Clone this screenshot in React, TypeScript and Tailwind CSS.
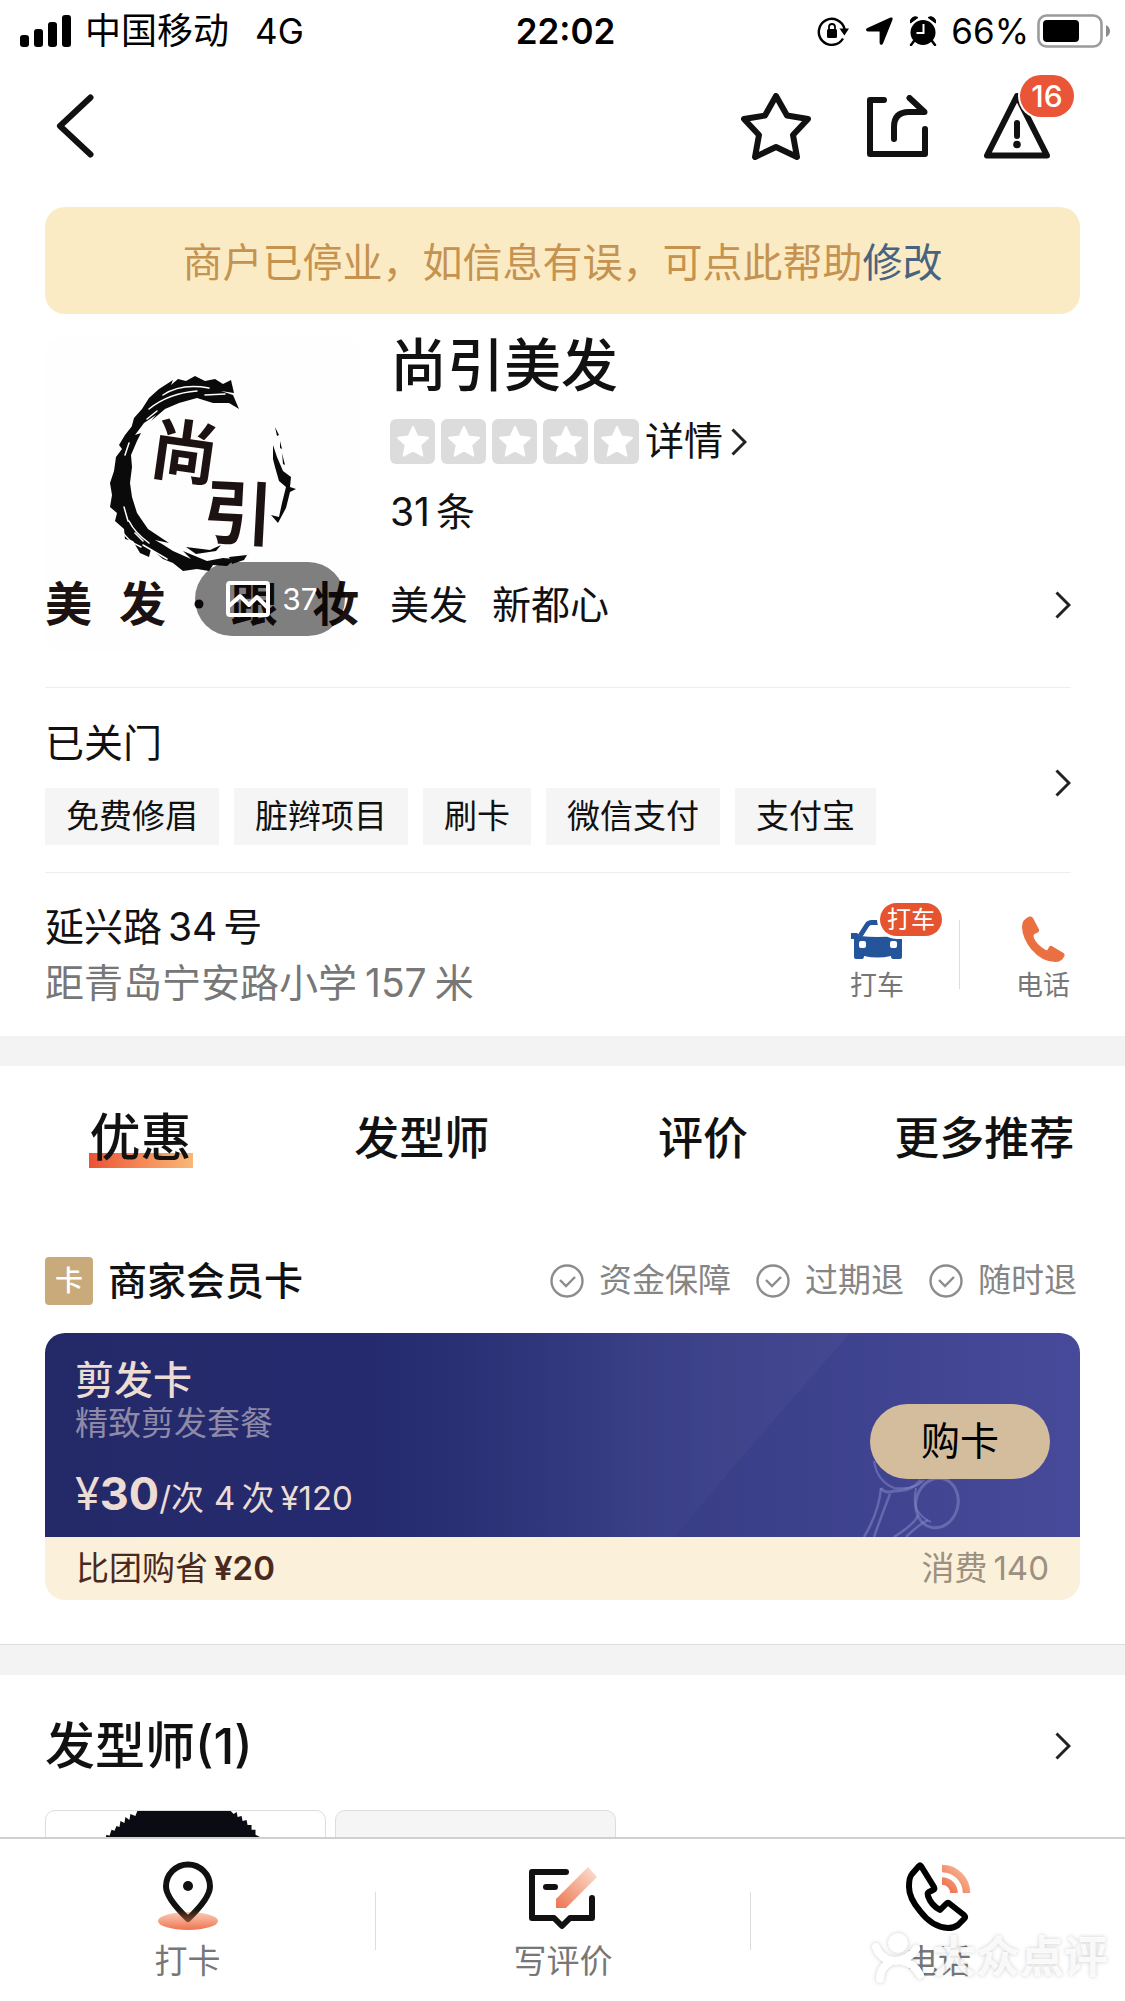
import React from 'react';

const TAGS = ['免费修眉', '脏辫项目', '刷卡', '微信支付', '支付宝'];
const TABS = ['优惠', '发型师', '评价', '更多推荐'];
const GUARANTEES = ['资金保障', '过期退', '随时退'];

// --- Small shared icons ---
const Chevron = () => (
  <svg viewBox="0 0 16 28" className="h-7 w-4 shrink-0" fill="none" stroke="#222" strokeWidth="3">
    <path d="M1.5 1.5 14 14 1.5 26.5" />
  </svg>
);

const CheckCircle = () => (
  <svg viewBox="0 0 34 34" className="h-[34px] w-[34px]" fill="none" stroke="#8c8c8c" strokeWidth="2.4">
    <circle cx="17" cy="17" r="15.5" />
    <path d="m10 16 6 6 9-9" />
  </svg>
);

const RatingStar = () => (
  <span className="flex h-[45px] w-[45px] items-center justify-center rounded-md bg-[#dcdcdc]">
    <svg viewBox="0 0 34 33" className="h-[33px] w-[34px]">
      <path
        d="M17 2 21.4 11.6 32 12.8 24.2 20 26.4 30.6 17 25.4 7.6 30.6 9.8 20 2 12.8 12.6 11.6Z"
        fill="#fff"
        stroke="#fff"
        strokeWidth="2"
        strokeLinejoin="round"
      />
    </svg>
  </span>
);

// --- Status bar ---
const StatusBar = () => (
  <div className="grid h-[62px] grid-cols-[1fr_auto_1fr] items-center pl-5 pr-3.5 text-4xl text-black">
    <div className="flex items-center">
      <svg viewBox="0 0 51 32" className="mr-3.5 h-8 w-[51px]">
        <rect x="0" y="20" width="9" height="12" rx="3" />
        <rect x="14" y="14" width="9" height="18" rx="3" />
        <rect x="28" y="7" width="9" height="25" rx="3" />
        <rect x="42" y="0" width="9" height="32" rx="3" />
      </svg>
      <span>中国移动</span>
      <span className="ml-[26px] text-[35px]">4G</span>
    </div>
    <span className="text-[35px] font-semibold">22:02</span>
    <div className="flex items-center justify-end">
      <svg viewBox="0 0 32 30" className="h-[30px] w-8">
        <path d="M26 22.5A13 13 0 1 1 27.5 13" fill="none" stroke="#000" strokeWidth="2.4" />
        <path d="M22.5 12.5h9.5l-4.6 7Z" />
        <rect x="10" y="13" width="10" height="9" rx="1.5" />
        <path d="M12 14v-3a3 3 0 0 1 6 0v3" fill="none" stroke="#000" strokeWidth="1.8" />
      </svg>
      <svg viewBox="0 0 27 28" className="ml-[17px] h-7 w-[27px]">
        <path d="M24.5.6Q27.4 0 26.4 3L17 26.5q-1 2-2.6 1-.8-.6-.8-2V14.5H2Q0 14.3 0 12.8q0-1.3 1.4-1.9Z" />
      </svg>
      <svg viewBox="0 0 28 30" className="ml-4 h-[30px] w-7">
        <circle cx="14" cy="16.5" r="12.5" />
        <path d="M1.5 7A5 5 0 0 1 9 1.5ZM26.5 7A5 5 0 0 0 19 1.5Z" stroke="#000" />
        <path d="m5 25-3 4M23 25l3 4" stroke="#000" strokeWidth="2.5" strokeLinecap="round" />
        <path d="M14.5 8v9H7.5" fill="none" stroke="#fff" strokeWidth="2" />
      </svg>
      <span className="ml-3.5 text-[35px]">66%</span>
      <svg viewBox="0 0 74 34" className="ml-2 h-[34px] w-[74px]">
        <rect x="1.5" y="1.5" width="63" height="31" rx="8" fill="none" stroke="#9b9b9b" strokeWidth="2.6" />
        <rect x="6" y="6" width="36" height="22" rx="4" />
        <path d="M69 11q4 2 4 6t-4 6Z" fill="#8b8b8b" />
      </svg>
    </div>
  </div>
);

const NavBar = () => (
  <header className="flex h-32 items-center pl-14 pr-[75px]">
    <button type="button" aria-label="返回" className="mr-auto">
      <svg viewBox="0 0 38 64" className="h-16 w-[38px]" fill="none" stroke="#111" strokeWidth="6" strokeLinecap="round">
        <path d="M34.5 3.5 4 32l30.5 28.5" strokeLinejoin="round" />
      </svg>
    </button>
    <div className="flex items-center gap-14">
      <button type="button" aria-label="收藏">
        <svg viewBox="0 0 70 67" className="h-[67px] w-[70px]" fill="none" stroke="#111" strokeWidth="6" strokeLinejoin="round">
          <path d="M35 3 46 22.5 67 26 52 42 56 64 35 54 14 64 18 42 3 26 24 22.5Z" />
        </svg>
      </button>
      <button type="button" aria-label="分享">
        <svg viewBox="0 0 61 62" className="h-[62px] w-[61px]" fill="none" stroke="#111" strokeWidth="6" strokeLinecap="round" strokeLinejoin="round">
          <path d="M17 5H3v54h55V34" />
          <path d="M27 44V32q0-15 15-15h15.5L42.5 3" />
        </svg>
      </button>
      <button type="button" aria-label="消息" className="relative">
        <svg viewBox="0 0 66 66" className="h-[66px] w-[66px]" fill="none" stroke="#111" strokeWidth="6" strokeLinecap="round" strokeLinejoin="round">
          <path d="M33 3 3 62.5h60Z" />
          <path d="M33 30v13" />
          <circle cx="33" cy="51.5" r="3.8" fill="#111" stroke="none" />
        </svg>
        <span className="absolute -top-[18px] left-9 flex h-[42px] w-[54px] items-center justify-center rounded-full bg-[#e95536] text-[30px] font-medium text-white ring-2 ring-white">
          16
        </span>
      </button>
    </div>
  </header>
);

// Brush-painted ring with the shop name inside
const ShopLogo = () => (
  <svg viewBox="0 0 315 315" className="h-full w-full">
    <g fill="#0b0a0a">
      <path d="M186 43 178 47 170 42 160 44 150 39 141 44 133 42 126 48 128 43 114 52 104 61 97 72 89 81 86 92 91 84 80 98 74 108 77 112 71 120 69 134 65 146 67 158 65 170 72 176 70 184 79 192 80 202 88 204 95 216 104 220 106 212 118 222 128 226 138 234 152 232 164 234 168 228 182 229 190 222 178 221 162 224 150 219 138 214 146 222 128 214 117 207 110 203 124 206 103 192 92 176 87 160 85 146 87 130 86 118 92 104 96 96 90 98 99 86 111 78 106 84 120 72 134 66 152 61 168 66 184 66 194 72 188 58 176 54 189 56Z" />
      <path d="m141 210 24 3 11-5-5 6-20 3ZM184 220l18-2 5-8-8 13-12 4ZM228 108l4 12 6 14 8 6-1 10 6 2-6 3-4 16-8 15-7-8 8 2 3-14 4-16-7-6-4-14-2-8Z" />
      <path d="m230 90 4 8-2 1ZM235 104l2 8-2-1ZM237 116l3 12-2-1Z" />
    </g>
    <g fill="none" stroke="#fff" strokeWidth="1.5" strokeLinecap="round">
      <path d="M104 72q20-16 48-18M118 58q18-12 46-7M160 58l20-1M80 118l4-12M84 184q6 12 20 22M74 190q8 14 22 20M90 196l8 8M98 208l24 14M79 170l4 14M102 82l10-8" />
    </g>
    <g fill="#1c1212" className="font-bold">
      <text x="106" y="140" fontSize="68" transform="rotate(8 140 112)">尚</text>
      <text x="158" y="202" fontSize="70" transform="rotate(3 190 176)">引</text>
      <g fontSize="47">
        <text x="0" y="284">美</text>
        <text x="74" y="284">发</text>
        <circle cx="154" cy="267" r="4.5" />
        <text x="186" y="284">跟</text>
        <text x="267" y="284">妆</text>
      </g>
    </g>
  </svg>
);

const ShopHeader = () => (
  <section className="flex gap-[30px] pt-[23px] pb-[35px]">
    <div className="relative h-[315px] w-[315px] shrink-0 overflow-hidden rounded-2xl bg-[#fefefe]">
      <ShopLogo />
      <button type="button" className="absolute right-[15px] bottom-4 flex h-[74px] w-[150px] items-center justify-center gap-3 rounded-full bg-black/50 pl-1 text-3xl text-white">
        <svg viewBox="0 0 44 36" className="h-9 w-11" fill="none" stroke="#fff" strokeWidth="4" strokeLinejoin="round">
          <rect x="2" y="2" width="40" height="32" rx="2" />
          <path d="m3 25 11-10 9 9 8-8 11 11" />
        </svg>
        37
      </button>
    </div>
    <div className="min-w-0 flex-1">
      <h1 className="text-[57px] leading-[58px] font-medium">尚引美发</h1>
      <a href="#reviews" className="mt-6 flex h-[45px] items-center gap-1.5">
        {[0, 1, 2, 3, 4].map((i) => (
          <RatingStar key={i} />
        ))}
        <span className="mr-0.5">详情</span>
        <Chevron />
      </a>
      <p className="mt-[25px] leading-[46px]">
        <span className="mr-1.5">31</span>条
      </p>
      <a href="#category" className="mt-[47px] flex items-center justify-between leading-[46px]">
        <span className="flex gap-6">
          <span>美发</span>
          <span>新都心</span>
        </span>
        <Chevron />
      </a>
    </div>
  </section>
);

const AddressRow = () => (
  <section className="flex pt-[31px] pb-[30px]">
    <div className="min-w-0 flex-1 leading-[46px]">
      <p>
        延兴路<span className="mx-1.5">34</span>号
      </p>
      <p className="mt-2.5 text-[#777]">
        距青岛宁安路小学<span className="mx-2">157</span>米
      </p>
    </div>
    <div className="flex items-start pt-4 text-[27px] leading-8 text-[#777]">
      <button type="button" className="relative flex flex-col items-center">
        <svg viewBox="0 0 53 40" className="mb-2.5 h-10 w-[53px]">
          <path d="M9 16 16 5q1.500-2.500 5-2.500h11q3.500 0 5 2.500L44 16" fill="none" stroke="#24559b" strokeWidth="5" />
          <path
            d="M0 13h6l3 3q17.5 2 35 0l3-3h6v6h-2v18q0 2-2 2h-7q-2 0-2-3-13.500 3-27 0 0 3-2 3H5q-2 0-2-2V19H0Z"
            fill="#24559b"
          />
          <rect x="8" y="21" width="7" height="7" rx="2" fill="#fff" />
          <rect x="39" y="21" width="7" height="7" rx="2" fill="#fff" />
        </svg>
        <span className="absolute -top-[17px] left-[30px] flex h-[33px] w-[62px] items-center justify-center rounded-full bg-[#e5532f] text-2xl whitespace-nowrap text-white ring-3 ring-white">
          打车
        </span>
        打车
      </button>
      <span className="mr-14 ml-[55px] h-[69px] w-px bg-[#ddd]" />
      <button type="button" className="mr-px flex flex-col items-center">
        <svg viewBox="0 0 43 46" className="-mt-1 mb-2 h-[46px] w-[43px]" fill="#ea7041">
          <path d="M7.5.5Q10 0 11 2l6 11.500q.8 2-1.200 3L12.500 18q-1.500.8-.8 3.500 3 7.500 12 12.500 1.500.8 2.300-1l1-2q1.500-2 3.500-.5L41.500 37q1.500 1 1 3-3 6-9 6Q20 46 9 33 .5 22 0 11.500 0 3 7.500.5Z" />
        </svg>
        电话
      </button>
    </div>
  </section>
);

const Tabs = () => (
  <nav className="grid h-[146px] grid-cols-4 items-center text-[45px] leading-[60px] font-medium">
    {TABS.map((tab, i) => (
      <a key={tab} href={`#tab-${i}`} className="text-center whitespace-nowrap">
        {i === 0 ? (
          <span className="inline-block bg-linear-to-r from-[#ea5134] to-[#f8b877] bg-[length:100%_15px] bg-bottom bg-no-repeat px-px text-[51px]">
            {tab}
          </span>
        ) : (
          tab
        )}
      </a>
    ))}
  </nav>
);

const MemberCard = () => (
  <section className="px-[45px] pt-[45px] pb-11">
    <div className="flex h-12 items-center pr-[3px]">
      <span className="flex h-12 w-12 items-center justify-center rounded-sm bg-[#c9aa7b] text-[28px] font-medium text-white">卡</span>
      <h2 className="ml-[15px] font-medium">商家会员卡</h2>
      <ul className="ml-auto flex gap-[25px] text-[33px] text-[#858585]">
        {GUARANTEES.map((text) => (
          <li key={text} className="flex items-center gap-[15px]">
            <CheckCircle />
            {text}
          </li>
        ))}
      </ul>
    </div>

    <div className="mt-7 overflow-hidden rounded-[20px]">
      <div className="relative flex h-[204px] items-center bg-linear-to-r from-[#232967] via-[#343a80] to-[#474a9a] px-[30px] pt-3 text-[#ecdcd3]">
        <svg viewBox="0 0 1035 204" preserveAspectRatio="none" className="absolute inset-0 h-full w-full">
          <defs>
            <linearGradient id="sheen" x1="0" x2="1" y1="0" y2="0">
              <stop offset="0" stopColor="#fff" stopOpacity="0" />
              <stop offset="1" stopColor="#fff" stopOpacity="0.03" />
            </linearGradient>
            <linearGradient id="dim" x1="0" x2="1" y1="0" y2="0">
              <stop offset="0" stopColor="#12185c" stopOpacity="0" />
              <stop offset=".5" stopColor="#12185c" stopOpacity=".35" />
              <stop offset="1" stopColor="#12185c" stopOpacity="0" />
            </linearGradient>
          </defs>
          <path d="M0 0H600V204H0Z" fill="url(#dim)" />
          <path d="M400 0H805Q690 130 630 204H400Z" fill="url(#sheen)" />
          <g fill="none" stroke="#8586c4" strokeOpacity=".55">
            <path d="M829 128q3 20 20 27 22 2 30-8" strokeWidth="2" />
            <path d="M836 155q-2 24-17 49M845 161q-8 20-16 43M849 204q22-14 24-22M861 204q12-12 22-17" strokeWidth="2.5" />
            <path d="M836 155q4 6 13 3 18 0 27-11" strokeWidth="3" />
            <ellipse cx="892" cy="170" rx="21" ry="25" strokeWidth="3" transform="rotate(14 892 170)" />
            <path d="M871 155q-3 14 1 22 6 9 14 12" strokeWidth="2" />
          </g>
        </svg>
        <div className="relative flex-1">
          <h3 className="leading-[46px] font-medium">剪发卡</h3>
          <p className="text-[33px] leading-10 text-[#8e8aa8]">精致剪发套餐</p>
          <p className="mt-6 text-[33px] leading-[54px]">
            <span className="text-[45px]">¥</span>
            <b className="text-[45px]">30</b>/次<span className="mr-1.5 ml-2.5">4</span>次<span className="ml-1.5">¥120</span>
          </p>
        </div>
        <button type="button" className="relative h-[75px] w-[180px] rounded-full bg-[#d3bd9c] text-black">
          购卡
        </button>
      </div>
      <div className="flex h-[63px] items-center justify-between bg-[#fbf0da] px-[31px] text-[33px] text-[#4a2a20]">
        <span className="flex items-center gap-1.5">
          比团购省
          <b className="font-semibold">¥20</b>
        </span>
        <span className="text-[#9c9180]">
          消费<span className="ml-1.5">140</span>
        </span>
      </div>
    </div>
  </section>
);

const Stylists = () => (
  <section className="px-[45px] pt-[41px]">
    <a href="#stylists" className="flex items-center justify-between pr-[9px]">
      <h2 className="text-[50px] leading-[60px] font-medium">发型师(1)</h2>
      <Chevron />
    </a>
    <div className="mt-[34px] flex gap-[9px]">
      <div className="h-[281px] w-[281px] overflow-hidden rounded-[10px] border border-[#ddd]">
        <svg viewBox="0 0 281 281" className="h-full w-full" fill="#0b0b14">
          <path d="M58 32 61 24 64 25 66 19 69 20 71 15 74 16 75 10 79 12 80 6 84 9 85 3 90 5 92 0H186L189 3 192 1 193 6 197 5 198 10 202 9 203 14 207 14 207 19 211 19 211 24 215 26 218 40 226 60V281H52V60Z" />
        </svg>
      </div>
      <div className="h-[281px] w-[281px] rounded-[10px] border border-[#ddd] bg-[#f5f5f5]" />
    </div>
  </section>
);

// --- Bottom actions ---
const PinIcon = () => (
  <svg viewBox="0 0 60 72" className="h-[72px] w-[60px]">
    <defs>
      <linearGradient id="pinShadow" x1="0" x2="0" y1="0" y2="1">
        <stop offset="0" stopColor="#f9cdb8" />
        <stop offset="1" stopColor="#ee7350" />
      </linearGradient>
      <linearGradient id="pinBody" gradientUnits="userSpaceOnUse" x1="0" x2="0" y1="50" y2="66">
        <stop offset="0" stopColor="#111" />
        <stop offset="1" stopColor="#a85436" />
      </linearGradient>
    </defs>
    <ellipse cx="30" cy="62" rx="30" ry="9" fill="url(#pinShadow)" />
    <path d="M30 60Q8 39 8 27.5a22 22 0 0 1 44 0Q52 39 30 60Z" fill="none" stroke="url(#pinBody)" strokeWidth="6" strokeLinejoin="round" />
    <circle cx="30" cy="27" r="5" fill="#111" />
  </svg>
);

const WriteIcon = () => (
  <svg viewBox="0 -9 68 72" className="h-[72px] w-[68px]" fill="none" stroke="#111" strokeWidth="6" strokeLinecap="round" strokeLinejoin="round">
    <defs>
      <linearGradient id="pencil" x1="0" x2="1" y1="1" y2="0">
        <stop offset="0" stopColor="#ee7450" />
        <stop offset="1" stopColor="#fbe3d5" />
      </linearGradient>
    </defs>
    <path d="M37 4H3v46h22l8 8 8-8h22V30" />
    <path d="M17 19h9" />
    <path d="M27 31v9h10L68 9 59-1Z" fill="url(#pencil)" stroke="none" />
  </svg>
);

const CallIcon = () => (
  <svg viewBox="0 -4 65 72" className="h-[72px] w-[65px]" fill="none" strokeWidth="6" strokeLinejoin="round">
    <defs>
      <linearGradient id="waves" gradientUnits="userSpaceOnUse" x1="36" x2="62" y1="30" y2="4">
        <stop offset="0" stopColor="#ec6541" />
        <stop offset="1" stopColor="#fac3a3" />
      </linearGradient>
    </defs>
    <path d="M15 3 28 24q1 2-1 3l-4 2q-2 1-1 4 3 9 12 14l6-6q2-2 4 0l14 11q2 2 0 4l-6 6q-4 3-10 3-16-1-28-17Q3 35 3 24 3 14 6 11l7-8q1-1 2 0Z" stroke="#000" />
    <path d="M36 5.5A24.5 24.5 0 0 1 60.5 30M36 18A12 12 0 0 1 48 30" stroke="url(#waves)" strokeWidth="7.5" />
  </svg>
);

const ACTIONS = [
  { label: '打卡', Icon: PinIcon },
  { label: '写评价', Icon: WriteIcon },
  { label: '电话', Icon: CallIcon },
];

const BottomBar = () => (
  <footer className="relative shrink-0 border-t-2 border-[#d0d0d0] bg-white">
    <div className="grid grid-cols-3 items-center pt-5 pb-[18px]">
      {ACTIONS.map(({ label, Icon }, i) => (
        <div key={label} className="flex items-center">
          {i > 0 && <span className="h-[58px] w-px bg-[#ddd]" />}
          <button type="button" className="flex flex-1 flex-col items-center gap-2 text-[33px] leading-[44px] text-[#777]">
            <Icon />
            {label}
          </button>
        </div>
      ))}
    </div>
    <div className="pointer-events-none absolute right-[17px] bottom-4 flex items-center gap-1 text-[44px] leading-[56px] font-bold text-white/85 [text-shadow:0_0_4px_rgb(0_0_0/0.2)]">
      <svg viewBox="0 0 58 56" className="h-14 w-[58px] drop-shadow-[0_0_2px_rgba(0,0,0,0.2)]" fill="none" stroke="#fff" strokeWidth="8" strokeLinecap="round">
        <circle cx="28" cy="14" r="10" fill="#fff" stroke="none" />
        <path d="M6 18q4 12 18 14 14 0 22-12M22 32q-12 6-12 18M32 32q12 2 18 14" />
      </svg>
      大众点评
    </div>
  </footer>
);

const App: React.FC = () => {
  return (
    <div className="flex h-screen flex-col bg-white font-['Inter','Noto_Sans_CJK_SC',sans-serif] text-[39px] text-[#111]">
      <StatusBar />
      <NavBar />
      <main className="min-h-0 flex-1 overflow-hidden pt-[17px]">
        <p className="mx-[45px] flex h-[107px] items-center justify-center rounded-[20px] bg-[#faebc5] pt-1 text-[40px] text-[#c5924f]">
          商户已停业，如信息有误，可点此帮助
          <a href="#edit" className="text-[#48637f]">修改</a>
        </p>
        <div className="pr-[54px] pl-[45px]">
          <ShopHeader />
          <section className="flex items-center justify-between border-y border-[#eee] pt-8 pb-[27px]">
            <div>
              <p className="leading-[46px]">已关门</p>
              <ul className="mt-[22px] flex gap-[15px] text-[33px] leading-[57px]">
                {TAGS.map((tag) => (
                  <li key={tag} className="bg-[#f5f5f5] px-[21px]">{tag}</li>
                ))}
              </ul>
            </div>
            <Chevron />
          </section>
          <AddressRow />
        </div>
        <div className="h-[30px] bg-[#f3f3f3]" />
        <Tabs />
        <MemberCard />
        <div className="h-[31px] border-t border-[#ddd] bg-[#f3f3f3]" />
        <Stylists />
      </main>
      <BottomBar />
    </div>
  );
};

export default App;
